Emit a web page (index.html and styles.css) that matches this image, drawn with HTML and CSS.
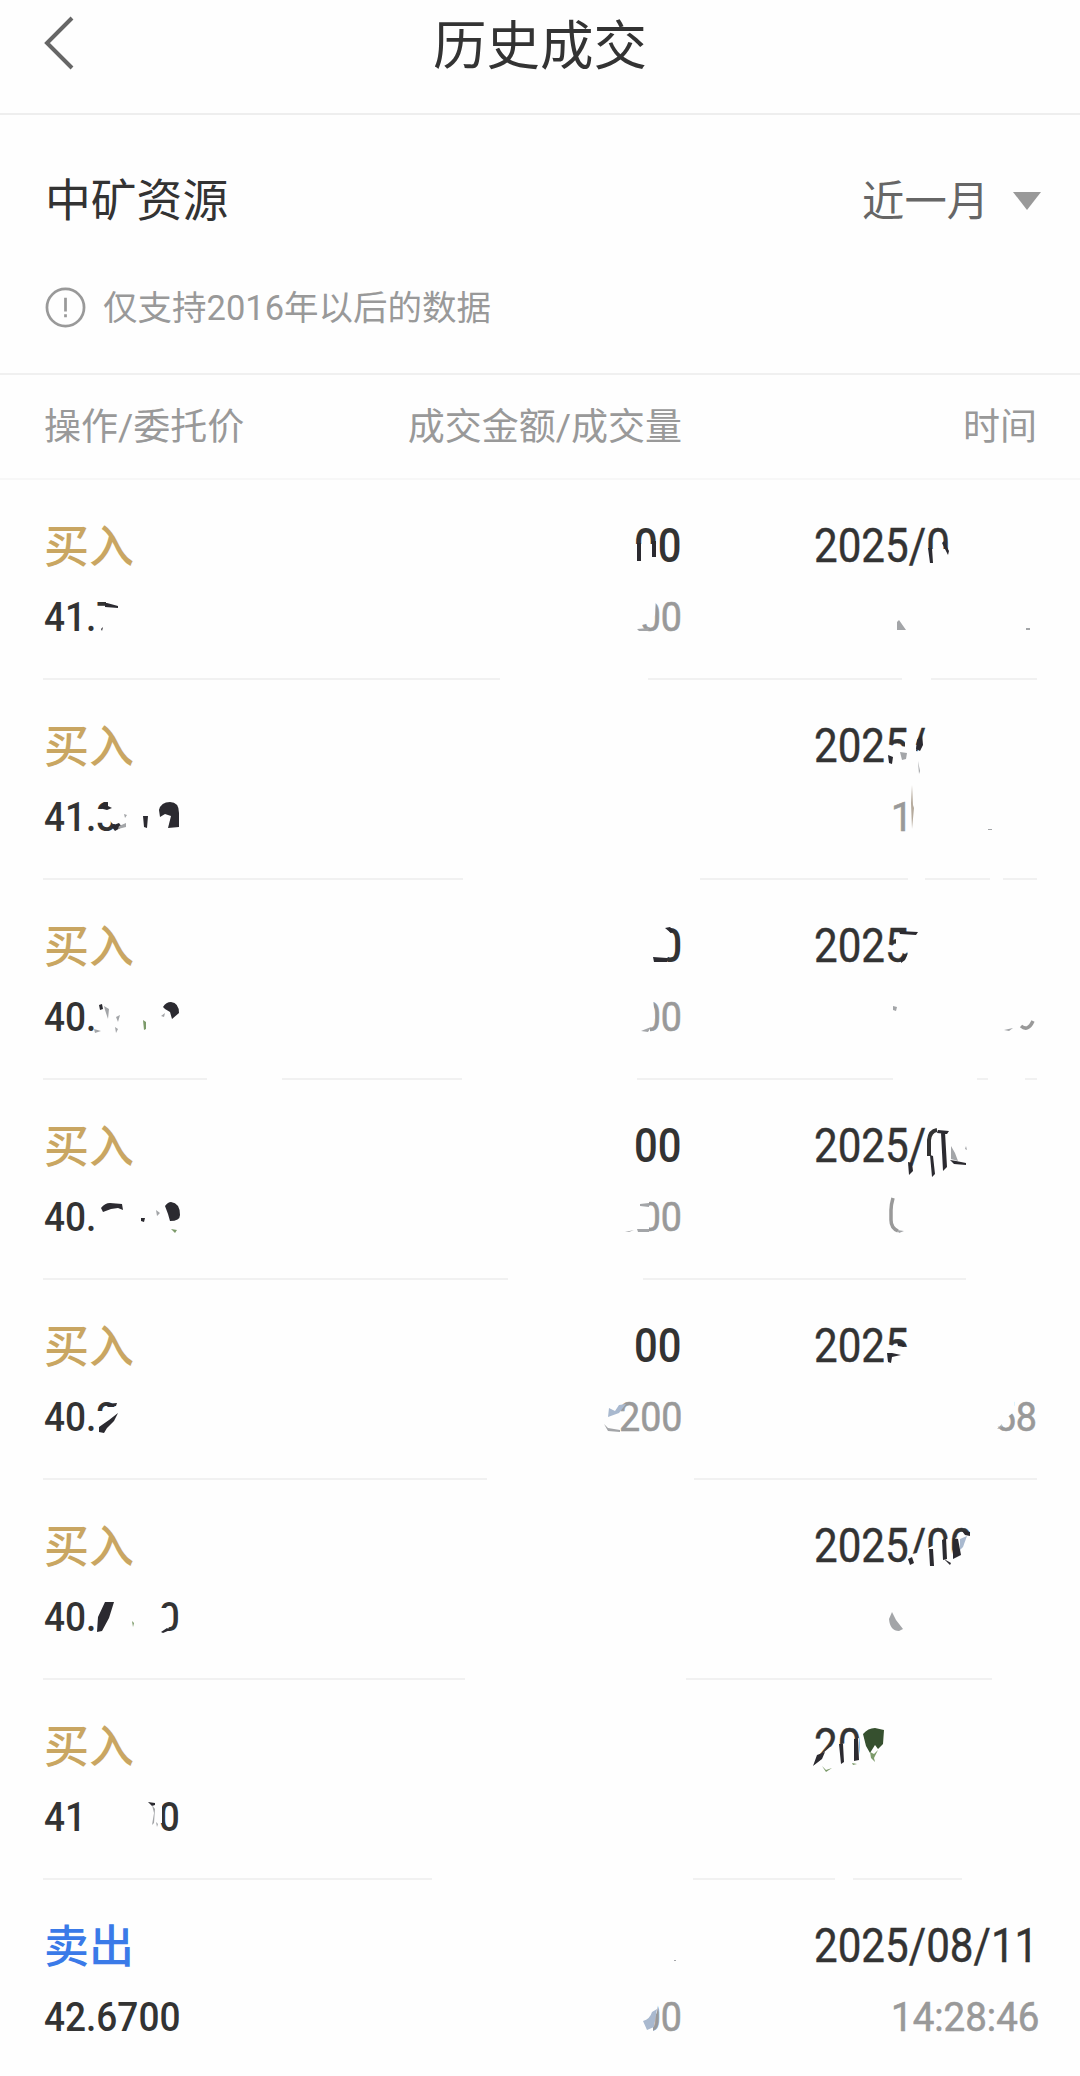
FILE: index.html
```html
<!DOCTYPE html>
<html lang="zh-CN">
<head>
    <meta charset="UTF-8">
    <meta name="viewport" content="width=device-width, initial-scale=1.0">
    <title>历史成交</title>
    <link rel="stylesheet" href="styles.css">
</head>
<body>
    <header class="navbar">
        <svg class="back" viewBox="0 0 32 54"><path d="M29 2L4 27l25 25"/></svg>
        <h1>历史成交</h1>
    </header>

    <section class="filter">
        <div class="filter-row">
            <span class="stock">中矿资源</span>
            <span class="period">近一月<i class="caret"></i></span>
        </div>
        <div class="notice">
            <svg class="info" viewBox="0 0 42 42">
                <circle cx="21" cy="21" r="19"/>
                <path d="M21 11v14M21 28v3"/>
            </svg>
            <span>仅支持2016年以后的数据</span>
        </div>
    </section>

    <div class="cols table-head">
        <span>操作/委托价</span>
        <span class="right">成交金额/成交量</span>
        <span class="right">时间</span>
    </div>

    <main class="list">
        <div class="cols row">
            <div class="op">
                <div class="action buy">买入</div>
                <div class="price"><span>41.7</span></div>
            </div>
            <div class="deal">
                <div class="amount"><span>00</span></div>
                <div class="volume"><span>00</span></div>
            </div>
            <div class="when">
                <div class="date"><span>2025/0</span></div>
                <div class="time"></div>
            </div>
            <svg class="marks" viewBox="0 0 1080 200">
                <path class="rule" d="M43 199H500M648 199H902M931 199H1037"/>
                <path class="wipe" d="M97 128h9v-8h16v34H97zM634 64h24v21h-24zM634 118h22l-1 17-5 8-16 4zM926 69h24v17h-24z"/>
                <path class="ink" d="M105 123h2l11 3v2l-13-1zM637 63h4v18h-4zM652 61h4v16h-4zM928 68h4l1 15h-3zM944 61l5 10-1 4-6-12z"/>
                <path class="ink" d="M101 149l2-2-1 4z"/>
                <path class="grey" d="M637 149l12-1-1 3h-9zM897 150v-8l2-2 7 10zM1026 148h4v2h-4z"/>
            </svg>
        </div>

        <div class="cols row">
            <div class="op">
                <div class="action buy">买入</div>
                <div class="price"><span>41.3</span></div>
            </div>
            <div class="deal"></div>
            <div class="when">
                <div class="date"><span>2025/</span></div>
                <div class="time"><span>1</span></div>
            </div>
            <svg class="marks" viewBox="0 0 1080 200">
                <path class="rule" d="M43 199H463M700 199H908M925 199H990M1003 199H1037"/>
                <path class="wipe" d="M97 129h11v-8h14v23h-9l-3-3h-4l-2-3h-7zM885 73l15-7 8 1v19h-22zM905 62l12 3-1 6 9 2v14h-20z"/>
                <path class="ink" d="M99 128l5-6 4 1v3l4 2-5 2zM111 146l8-3 3 4-7 4zM143 136h5l-1 12-3-1zM159 130q2-8 11-8 9 0 9 11v14l-11 1 3-12-6-2-5 3zM888 75l5 2-1 7-3-1zM917 60l5-7 1 12-3 6-4-2z"/>
                <path class="grey" d="M119 146l7-3v4l-8 2zM124 134l3 1-2 3zM900 72l7 1-1 6-4 1zM918 81l2 10-1 3zM988 149h4v1h-4z"/>
                <path class="brown" d="M912 105l1 20 1 3-2 21-1-26z"/>
            </svg>
        </div>

        <div class="cols row">
            <div class="op">
                <div class="action buy">买入</div>
                <div class="price"><span>40.</span></div>
            </div>
            <div class="deal">
                <div class="amount"><span>0</span></div>
                <div class="volume"><span>00</span></div>
            </div>
            <div class="when">
                <div class="date"><span>2025</span></div>
                <div class="time"></div>
            </div>
            <svg class="marks" viewBox="0 0 1080 200">
                <path class="rule" d="M43 199H207M282 199H462M637 199H893M977 199H988M1025 199H1037"/>
                <path class="wipe" d="M652 44h13l7 12v18l-5 4v8h-15zM634 118h19l2 20-5 7v9h-16zM896 56h14v14l-5 4-7-3-2-5z"/>
                <path class="ink" d="M665 48l5-1 4 4-3 2zM653 77l14 1v4h-13zM899 51l19 1-2 3-16-1zM901 78l7-5-3 7-4 3zM99 125l3-1 1 5-3 1zM163 127q3-5 8-5 8 1 8 11l-7 6-2-7-5-3z"/>
                <path class="grey" d="M104 126l5 3-1 10-3-9zM116 137l4-2-2 7zM115 147l3 2-2 4zM94 149l7 2-6 2zM161 136l4-3-1 4zM641 151l10-4-3 5zM893 126l4 1-1 4-3-1zM1004 150l9-2-4 3z"/>
                <path class="green" d="M143 140l3 2v7l-2 1z"/>
                <path class="grey-line" d="M1021 146q7 6 12-5"/>
            </svg>
        </div>

        <div class="cols row">
            <div class="op">
                <div class="action buy">买入</div>
                <div class="price"><span>40.</span></div>
            </div>
            <div class="deal">
                <div class="amount"><span>00</span></div>
                <div class="volume"><span>00</span></div>
            </div>
            <div class="when">
                <div class="date"><span>2025/</span></div>
                <div class="time"></div>
            </div>
            <svg class="marks" viewBox="0 0 1080 200">
                <path class="rule" d="M43 199H508M643 199H966"/>
                <path class="wipe" d="M634 118h15v34h-15z"/>
                <path class="ink" d="M101 128q4-5 9-5l12 1 1 6-5-2-7 1-8 3zM141 138h4l-1 4-3-1zM165 126q3-4 6-4 9 1 9 13 0 6-10 6l-2-7zM908 82l4 1 1 8-4 4zM930 75l3 1 2 18-3 3zM941 53l4-1 2 35-4 4zM938 50l11 1-2 3-10-1zM950 80l6 1 10 2v2l-12-1z"/>
                <path class="ink-line" d="M929 76V60q1-9 8-10"/>
                <path class="grey" d="M640 124l9-1v4l-9-1zM637 149h12v3h-11zM625 152l9-2-5 2zM156 130l4 3-3 3zM951 66l4 7 3 8-7-2zM966 66l1 4-2-1zM897 150l7 1-5 2z"/>
                <path class="grey-line" d="M893 118q-2 7-2 12v10q0 8 7 11"/>
                <path class="green" d="M171 149l6 1-2 3z"/>
            </svg>
        </div>

        <div class="cols row">
            <div class="op">
                <div class="action buy">买入</div>
                <div class="price"><span>40.2</span></div>
            </div>
            <div class="deal">
                <div class="amount"><span>00</span></div>
                <div class="volume"><span>200</span></div>
            </div>
            <div class="when">
                <div class="date"><span>2025</span></div>
                <div class="time end"><span>58</span></div>
            </div>
            <svg class="marks" viewBox="0 0 1080 200">
                <path class="rule" d="M43 199H487M694 199H1037"/>
                <path class="wipe" d="M97 131h8v-4h17v28H97zM884 66l24 1v22h-24zM994 118h20v14l-9 7-4 8-7-1z"/>
                <path class="ink" d="M105 124l12-1-1 3-8 1zM99 147l10-7 9-7-4 8-7 7-3 5-5-1zM887 73l5 0 9 2-9 2-1 6-3-1zM897 62l9 2-2 3-6-1z"/>
                <path class="blue" d="M609 128l6 3 4-6 7-1-7 9-11 4z"/>
                <path class="grey" d="M604 144l4 4 12 2v2l-12-1zM997 149l5-5-1 4z"/>
            </svg>
        </div>

        <div class="cols row">
            <div class="op">
                <div class="action buy">买入</div>
                <div class="price"><span>40.</span><span>0</span></div>
            </div>
            <div class="deal"></div>
            <div class="when">
                <div class="date"><span>2025/00</span></div>
                <div class="time"></div>
            </div>
            <svg class="marks" viewBox="0 0 1080 200">
                <path class="rule" d="M43 199H465M686 199H992"/>
                <path class="wipe" d="M156 128h11l2 2v17l-3 6h-10zM906 77l6-3 10-2v14h-16zM924 70l27-13v29h-27zM955 58l18-6v34h-23z"/>
                <path class="ink" d="M98 137l7-15 9 0-5 16-7 13-5 1zM161 152l6-4 3 2-7 3zM908 79l4-2 2 6-4 2zM929 69h4l1 17h-4zM942 60l4-2 1 21-4 1zM944 79l7 4-1 2zM953 58l5 1 3 16-8 4zM962 51l8 1v4l-5-1z"/>
                <path class="blue" d="M960 59l7-3-4 11-3 3z"/>
                <path class="green" d="M132 141l2 2-1 4z"/>
                <path class="grey" d="M889 139l3-7 4 8 7 9-4 2q-9 0-10-12z"/>
            </svg>
        </div>

        <div class="cols row">
            <div class="op">
                <div class="action buy">买入</div>
                <div class="price"><span>41</span><span>0</span></div>
            </div>
            <div class="deal"></div>
            <div class="when">
                <div class="date"><span>20</span></div>
                <div class="time"></div>
            </div>
            <svg class="marks" viewBox="0 0 1080 200">
                <path class="rule" d="M43 199H432M693 199H835M853 199H962"/>
                <path class="wipe" d="M812 79l10-5 8-7 16-4 6-2 7-3v28h-47zM158 124l4-1v20h-4z"/>
                <path class="ink" d="M813 86l4-11 8-3-3 7zM839 64h4l1 18-3 2zM854 59l4-1 1 22-5 1zM148 122l7 1v2l-3 1z"/>
                <path class="moss" d="M863 54q5-6 12-6l9 2-1 14-5 5-3-4-5 8-4-7z"/>
                <path class="grey" d="M152 125l3 4-1 14-2 2 2-12zM156 142l2 2-1 3z"/>
                <path class="green" d="M822 86l4 4 6-2-6 4zM870 72l4 2 4-4-4 8 1 4-4-4zM852 83l5 1-4 1z"/>
            </svg>
        </div>

        <div class="cols row">
            <div class="op">
                <div class="action sell">卖出</div>
                <div class="price"><span>42.6700</span></div>
            </div>
            <div class="deal">
                <div class="amount"></div>
                <div class="volume"><span>00</span></div>
            </div>
            <div class="when">
                <div class="date"><span>2025/08/11</span></div>
                <div class="time"><span>14:28:46</span></div>
            </div>
            <svg class="marks" viewBox="0 0 1080 200">
                <path class="wipe" d="M634 118h25l-2 14-4 9v12h-19z"/>
                <path class="blue" d="M643 141q7-2 9-9l5-3-3 18-7 3z"/>
                <path class="grey" d="M674 80h2v1h-2z"/>
            </svg>
        </div>
    </main>
</body>
</html>
```

FILE: styles.css
```css
* {
    box-sizing: border-box;
}
body {
    margin: 0;
    width: 1080px;
    height: 2076px;
    overflow: hidden;
    background: #fefefe;
    color: #333;
    font-family: Roboto, "Noto Sans CJK SC", sans-serif;
}
.navbar {
    position: relative;
    height: 115px;
    border-bottom: 2px solid #eee;
    display: flex;
    justify-content: center;
}
.navbar h1 {
    margin: 0;
    font-size: 53.5px;
    font-weight: 400;
    line-height: 94px;
}
.back {
    position: absolute;
    left: 43px;
    top: 16px;
    width: 32px;
    height: 54px;
    fill: none;
    stroke: #666;
    stroke-width: 4;
}
.filter {
    height: 260px;
    padding: 52px 39px 0 45px;
    border-bottom: 2px solid #f0f0f0;
}
.filter-row {
    display: flex;
    justify-content: space-between;
    align-items: center;
    height: 60px;
}
.stock {
    font-size: 45.8px;
}
.period {
    display: flex;
    align-items: center;
    gap: 24px;
    font-size: 42.3px;
    color: #666;
}
.caret {
    margin-top: 7px;
    border: 14px solid transparent;
    border-top: 18px solid #999;
    border-bottom: 0;
}
.notice {
    display: flex;
    align-items: center;
    gap: 17px;
    height: 50px;
    margin-top: 55px;
    font-size: 34.5px;
    color: #999;
}
.notice span {
    margin-top: -5px;
}
.info {
    width: 41px;
    height: 41px;
    fill: none;
    stroke: #999;
    stroke-width: 2.8;
}
.cols {
    display: grid;
    grid-template-columns: 200px 438px 221px;
    padding: 0 43px 0 44px;
}
.cols > :nth-child(3) {
    margin-left: 132px;
    width: 223px;
}
.table-head {
    height: 105px;
    line-height: 105px;
    border-bottom: 2px solid #f7f7f7;
    font-size: 37px;
    color: #999;
    white-space: nowrap;
}
.right {
    text-align: right;
}
.row {
    position: relative;
    height: 200px;
}
.row span {
    display: inline-block;
    transform-origin: left;
}
.action {
    height: 103px;
    padding-top: 35px;
    font-size: 45px;
    font-weight: 500;
    line-height: 66px;
}
.buy {
    color: #c9a662;
}
.sell {
    color: #3a7ae8;
}
.price {
    display: flex;
    justify-content: space-between;
    width: 136px;
    line-height: 70px;
    font-size: 40px;
    font-weight: 500;
}
.price span {
    transform: scaleX(.925);
}
.price span + span {
    transform-origin: right;
}
.deal {
    text-align: right;
}
.amount, .date {
    height: 103px;
    padding-top: 33px;
    font-size: 48px;
    line-height: 66px;
}
.amount {
    font-weight: 500;
}
.date span {
    transform: scaleX(.878);
    -webkit-text-stroke: .4px #333;
}
.volume, .time {
    font-size: 40px;
    line-height: 70px;
    color: #999;
    -webkit-text-stroke: .6px #999;
}
.row .amount span {
    transform: scaleX(.87);
    transform-origin: right;
}
.row .volume span {
    transform: scaleX(.94);
    transform-origin: right;
}
.time {
    width: 146px;
    margin-left: auto;
}
.time span {
    transform: scaleX(.962);
}
.time.end {
    text-align: right;
}
.row .time.end span {
    transform: scaleX(.94);
    transform-origin: right;
}

/* smudges and broken dividers lie over each row */
.marks {
    position: absolute;
    left: 0;
    top: 0;
    width: 1080px;
    height: 200px;
}
.rule {
    stroke: #f1f1f1;
    stroke-width: 2;
}
.wipe {
    fill: #fefefe;
}
.ink {
    fill: #2b2a30;
}
.ink-line {
    fill: none;
    stroke: #333;
    stroke-width: 4;
}
.grey {
    fill: #a3a5a8;
}
.grey-line {
    fill: none;
    stroke: #999;
    stroke-width: 3.5;
}
.brown {
    fill: #b5aa9c;
}
.green {
    fill: #7c9a6a;
}
.moss {
    fill: #36502f;
}
.blue {
    fill: #a9b9cf;
}
```
